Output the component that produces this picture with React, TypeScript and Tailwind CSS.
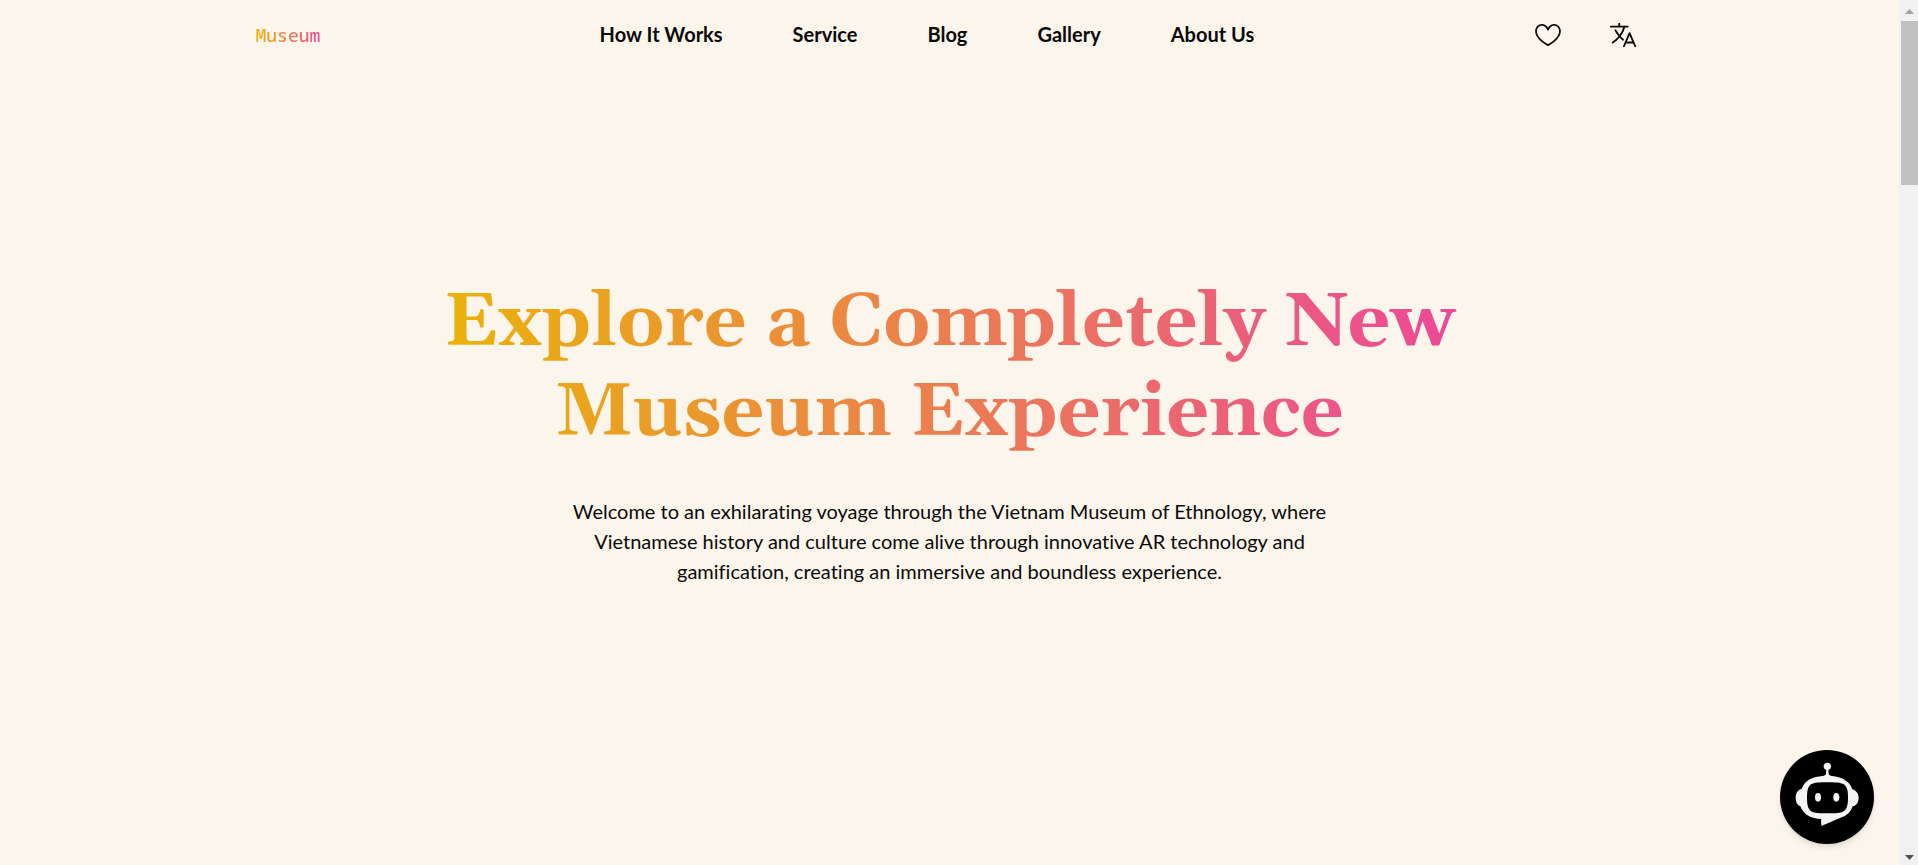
import { GoHeart } from "react-icons/go";
import { IoLanguageOutline } from "react-icons/io5";

const links = ["How It Works", "Service", "Blog", "Gallery", "About Us"];

function Header() {
  return (
    <header className="mx-auto flex h-[70px] w-full max-w-[1388px] items-center justify-between">
      <a
        href="#"
        className="bg-linear-to-r/srgb from-[#eab308] to-[#ec4899] bg-clip-text font-['Noto_Sans_Mono','DejaVu_Sans_Mono',monospace] text-lg font-medium text-transparent"
      >
        Museum
      </a>
      <nav className="flex items-center gap-[70px] pb-0.5">
        {links.map((label) => (
          <a key={label} href="#" className="text-xl font-bold">
            {label}
          </a>
        ))}
      </nav>
      <div className="flex items-center gap-[46px] pr-1.5">
        <button type="button" aria-label="Favourites">
          <GoHeart size={28} />
        </button>
        <button type="button" aria-label="Change language">
          <IoLanguageOutline size={30} />
        </button>
      </div>
    </header>
  );
}

function Hero() {
  return (
    <main className="flex flex-col items-center px-6 pt-[208px] text-center">
      <h1 className="max-w-[1024px] bg-linear-to-r/srgb from-[#eab308] to-[#ec4899] bg-clip-text font-[Gelasio,Georgia,serif] text-[75px] leading-[90px] font-bold text-transparent">
        Explore a Completely New Museum Experience
      </h1>
      <p className="mt-[38px] max-w-[780px] text-xl leading-[30px] [font-variant-ligatures:no-common-ligatures]">
        Welcome to an exhilarating voyage through the Vietnam Museum of
        Ethnology, where Vietnamese history and culture come alive through
        innovative AR technology and gamification, creating an immersive and
        boundless experience.
      </p>
    </main>
  );
}

function ChatButton() {
  return (
    <button
      type="button"
      aria-label="Open chat"
      className="fixed right-11 bottom-[21px] size-[94px] rounded-full bg-black shadow-md"
    >
      <svg viewBox="0 0 282 282" className="size-full">
        <g fill="#f5f5f5">
          <circle cx="142" cy="49" r="11" />
          <path d="M139 55h6l1 16c1 4 5 6 10 7c28 3 52 13 61 40c12 4 19 13 19 25s-6 23-18 26c-5 15-16 27-33 33l-61 26l-1-21c-29-1-52-12-62-38c-10-4-14-14-14-27s6-22 18-26c10-26 34-36 63-38c5-1 9-3 10-7z" />
        </g>
        <path
          d="M142 97c48 0 62 1 62 46s-14 47-62 47s-61-2-61-47s13-46 61-46z"
          fill="#000"
        />
        <g fill="#f5f5f5">
          <ellipse cx="114" cy="142" rx="9" ry="13" />
          <ellipse cx="169" cy="142" rx="9" ry="13" />
        </g>
      </svg>
    </button>
  );
}

function ScrollRail() {
  return (
    <div
      aria-hidden="true"
      className="sticky top-0 flex h-screen w-[19px] shrink-0 flex-col items-end justify-between bg-[#f1f1f1]"
    >
      <div className="flex w-[17px] flex-col items-center">
        <svg viewBox="0 0 17 21" className="h-[21px] w-[17px]" fill="#a3a3a3">
          <path d="M4 14h9L8.500 9z" />
        </svg>
        <div className="h-[164px] w-full bg-[#c1c1c1]" />
      </div>
      <svg viewBox="0 0 17 17" className="size-[17px]" fill="#505050">
        <path d="M4 7h9l-4.500 5z" />
      </svg>
    </div>
  );
}

export default function App() {
  return (
    <div className="flex min-h-screen bg-[#fcf5eb] font-[Lato,sans-serif] text-[#0a0a0a]">
      <div className="min-w-0 flex-1">
        <Header />
        <Hero />
        <ChatButton />
      </div>
      <ScrollRail />
    </div>
  );
}
